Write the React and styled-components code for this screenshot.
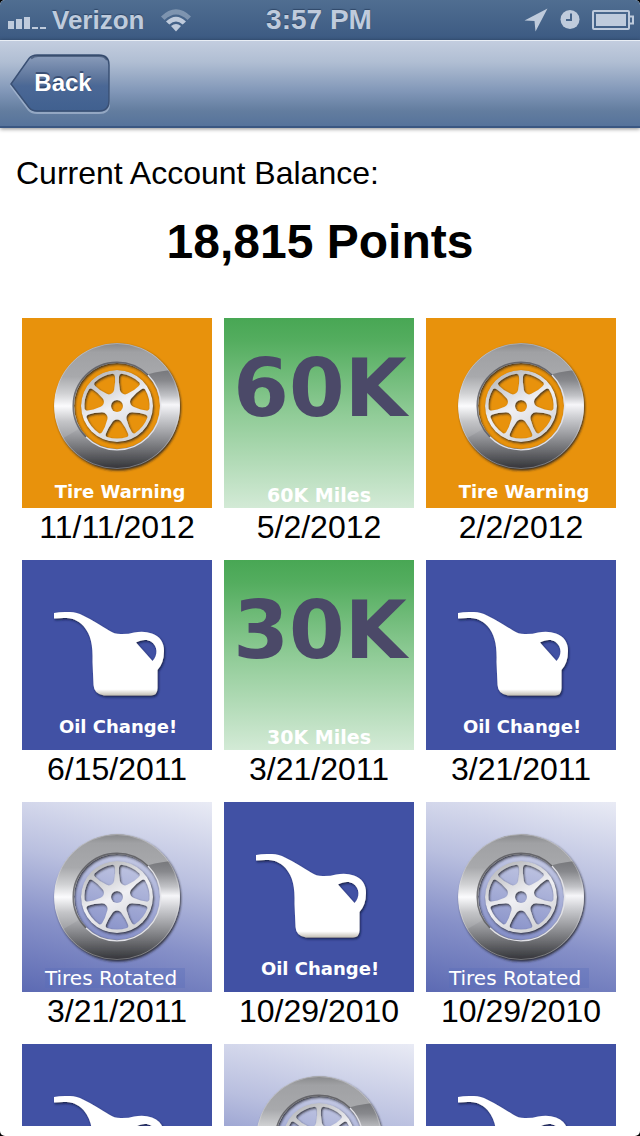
import React, { useId } from 'react'
import styled, { createGlobalStyle } from 'styled-components';

const GlobalStyle = createGlobalStyle`
    body {
      margin: 0;
      background: #000;
      font-family: "Liberation Sans", Arial, sans-serif;
      color: #000;
    }
`;

const Screen = styled.div`
    display: flex;
    flex-direction: column;
    height: 100vh;
    background: #fff;
    border-radius: 5px;
    overflow: hidden;
`;

const StatusBar = styled.div`
    display: grid;
    grid-template-columns: 1fr auto 1fr;
    align-items: center;
    flex: none;
    height: 40px;
    padding: 0 6px 0 8px;
    background: linear-gradient(#506e91, #3c5a82);
    color: #bfcbdc;
    font-weight: bold;
    text-shadow: 0 -1px 1px rgba(20, 40, 70, .5);

    svg {
      display: block;
      fill: currentColor;
    }
`;

const StatusGroup = styled.div`
    display: flex;
    align-items: center;
    justify-content: ${props => props.$end ? "flex-end" : "flex-start"};
    gap: ${props => props.$end ? "12px" : "6px"};
`;

const Carrier = styled.span`
    font-size: 26px;
    line-height: 40px;
    margin-right: 10px;
`;

const Clock = styled.span`
    padding-right: 4px;
    font-size: 28px;
    line-height: 40px;
`;

const NavBar = styled.header`
    display: flex;
    align-items: center;
    flex: none;
    box-sizing: border-box;
    height: 88px;
    padding: 0 10px;
    border-top: 1px solid #e9eef5;
    border-bottom: 2px solid #3a5782;
    background: linear-gradient(#c3cddf, #b0bed3 25%, #8096b7 60%, #637d9f 82%, #56739b);
    box-shadow: 0 1px 4px rgba(0, 0, 0, .45);
    z-index: 1;
`;

const BackButton = styled.button`
    display: grid;
    align-items: center;
    padding: 0;
    border: 0;
    background: none;
    color: #fff;
    font-family: inherit;
    font-size: 24px;
    font-weight: bold;
    line-height: 28px;
    text-shadow: 0 -2px 0 rgba(30, 50, 85, .6);
    cursor: pointer;

    svg, span {
      grid-area: 1 / 1;
      display: block;
    }

    span {
      padding: 0 0 2px 6px;
    }
`;

const Content = styled.main`
    flex: 1;
    min-height: 0;
    margin-bottom: 10px;
    overflow: auto;
    scrollbar-width: none;
`;

const BalanceLabel = styled.h2`
    margin: 25px 16px 21px;
    font-size: 32px;
    font-weight: normal;
    line-height: 40px;
`;

const Balance = styled.p`
    margin: 0 0 48px;
    font-size: 48px;
    font-weight: bold;
    line-height: 56px;
    text-align: center;
`;

const Grid = styled.ul`
    display: grid;
    grid-template-columns: repeat(3, 1fr);
    gap: 14px 12px;
    margin: 0;
    padding: 0 24px 0 22px;
    list-style: none;
`;

const backgrounds = {
  warning: "#e8920c",
  miles: "linear-gradient(#48a754, #54ad5f 12%, #8fcb96 50%, #d3ead6)",
  oil: "#4151a4",
  rotated: "linear-gradient(192deg, #e9ebf5, #b9bfdf 38%, #8690c8 68%, #5c6ab3)",
};

const Tile = styled.div`
    display: grid;
    aspect-ratio: 1;
    background: ${props => backgrounds[props.$kind]};

    > * {
      grid-area: 1 / 1;
    }

    svg {
      display: block;
      width: 100%;
      height: 100%;
    }
`;

const Caption = styled.span`
    place-self: end center;
    color: #fff;
    font-family: "DejaVu Sans", Verdana, sans-serif;
    font-size: 18px;
    font-weight: bold;
    line-height: 20px;
`;

const WarningCaption = styled(Caption)`
    padding-left: 6px;
    margin-bottom: 6px;
`;

const OilCaption = styled(Caption)`
    padding-left: 2px;
    margin-bottom: 13px;
`;

const MilesCaption = styled(Caption)`
    margin-bottom: 3px;
    font-size: 19px;
`;

const RotatedCaption = styled(Caption)`
    padding-right: 8px;
    margin: 0 4px 4px 0;
    background: rgba(90, 110, 185, .35);
    font-size: 20px;
    font-weight: normal;
`;

const MilesFigure = styled.strong`
    place-self: start center;
    margin-top: 31px;
    padding-left: 2px;
    color: #4b4968;
    font-family: "DejaVu Sans", Verdana, sans-serif;
    font-size: 80px;
    line-height: 80px;
`;

const EarnedOn = styled.time`
    display: block;
    font-size: 32px;
    line-height: 38px;
    text-align: center;
`;

function Tire({ cy }) {
  const id = useId();
  const spokes = [0, 1, 2, 3, 4, 5, 6];

  return (
    <svg viewBox="0 0 190 190" aria-hidden="true">
      <defs>
        <linearGradient id={id + "light"} x1="0" y1="-64" x2="0" y2="64" gradientUnits="userSpaceOnUse">
          <stop offset="0" stopColor="#858688" />
          <stop offset=".08" stopColor="#a0a1a4" />
          <stop offset=".27" stopColor="#a8a9ac" />
          <stop offset=".4" stopColor="#d0d1d3" />
          <stop offset=".5" stopColor="#fbfbfd" />
          <stop offset=".62" stopColor="#c4c5c8" />
          <stop offset=".8" stopColor="#909195" />
        </linearGradient>
        <linearGradient id={id + "dark"} x1="0" y1="-64" x2="0" y2="64" gradientUnits="userSpaceOnUse">
          <stop offset=".2" stopColor="#737478" />
          <stop offset=".3" stopColor="#87888c" />
          <stop offset=".42" stopColor="#c2c3c7" />
          <stop offset=".49" stopColor="#f6f6f9" />
          <stop offset=".58" stopColor="#d0d1d5" />
          <stop offset=".72" stopColor="#9c9da1" />
          <stop offset=".86" stopColor="#67686c" />
          <stop offset="1" stopColor="#2f3034" />
        </linearGradient>
        <linearGradient id={id + "rim"} x1="-20" y1="-36" x2="16" y2="36" gradientUnits="userSpaceOnUse">
          <stop offset="0" stopColor="#b4b5b8" />
          <stop offset=".5" stopColor="#f0f0f4" />
          <stop offset="1" stopColor="#cfd0d3" />
        </linearGradient>
        <mask id={id + "ring"} x="-70" y="-70" width="140" height="140" maskUnits="userSpaceOnUse">
          <circle r="63" fill="#fff" />
          <circle r="43" fill="#000" />
        </mask>
        <mask id={id + "wheel"} x="-70" y="-70" width="140" height="140" maskUnits="userSpaceOnUse">
          <circle r="36" fill="#fff" />
          <circle r="6" fill="#000" />
          {spokes.map(n => (
            <path
              key={n}
              transform={"rotate(" + (n * 360 / 7 + 180 / 7) + ")"}
              d="M-11 -27.500Q-12 -30 -10 -31A32.500 32.500 0 0 1 10 -31Q12 -30 11 -27.500Q9 -22 5.500 -17.500Q3.500 -13.500 0 -13.500Q-3.500 -13.500 -5.500 -17.500Q-9 -22 -11 -27.500Z"
            />
          ))}
        </mask>
        <filter id={id + "shadow"} x="-20%" y="-20%" width="140%" height="140%">
          <feDropShadow dx="1" dy="1.500" stdDeviation="1" floodColor="#202026" floodOpacity=".85" />
        </filter>
      </defs>
      <g transform={"translate(95 " + cy + ")"}>
        <g filter={"url(#" + id + "shadow)"}>
          <g mask={"url(#" + id + "ring)"}>
            <circle r="63" fill={"url(#" + id + "light)"} />
            <path d="M-64 38Q-50 30 -40 24Q0 -26 32 -32Q42 -35 64 -37V64H-64Z" fill={"url(#" + id + "dark)"} />
          </g>
        </g>
        <circle r="62.500" fill="none" stroke="#e6e6ea" strokeOpacity=".35" />
        <path d="M-31 31A43.500 43.500 0 0 1 31 -31" fill="none" stroke="#55555a" strokeWidth="1.500" strokeOpacity=".8" />
        <path d="M-31 31A43.500 43.500 0 0 0 31 -31" fill="none" stroke="#e2e2e8" strokeWidth="1.200" />
        <g filter={"url(#" + id + "shadow)"}>
          <circle r="36" fill={"url(#" + id + "rim)"} mask={"url(#" + id + "wheel)"} />
        </g>
      </g>
    </svg>
  )
}

function OilCan() {
  const id = useId();

  return (
    <svg viewBox="0 0 190 190" aria-hidden="true">
      <defs>
        <linearGradient id={id + "body"} x1="0" y1="52" x2="0" y2="136" gradientUnits="userSpaceOnUse">
          <stop offset=".92" stopColor="#fff" />
          <stop offset="1" stopColor="#bdb9ae" />
        </linearGradient>
        <filter id={id + "shadow"} x="-10%" y="-10%" width="120%" height="120%">
          <feDropShadow dx="1" dy="1.500" stdDeviation="1" floodColor="#0c1238" floodOpacity=".85" />
        </filter>
      </defs>
      <path
        filter={"url(#" + id + "shadow)"}
        fill={"url(#" + id + "body)"}
        fillRule="evenodd"
        d="M32 53Q38 51.500 48 52Q55 52 61 55.500C70 60 80 66 87 70.500Q93 74.500 100 74Q107 74 112 72.500Q122 70.500 130 73.500Q142 78 142 91Q142 103 135.500 110V128Q135.500 135.500 129 135.500H82Q72 134 71.500 125L70.500 102C71 85 69 75 61.500 66C53 57.500 46 57.500 32 58.500ZM114 82.500C119 79.500 125 79 129 81.500C136 86.500 136 95 130.500 101Z"
      />
    </svg>
  )
}

const rewards = [
  { kind: "warning", caption: "Tire Warning", date: "11/11/2012" },
  { kind: "miles", figure: "60K", caption: "60K Miles", date: "5/2/2012" },
  { kind: "warning", caption: "Tire Warning", date: "2/2/2012" },
  { kind: "oil", caption: "Oil Change!", date: "6/15/2011" },
  { kind: "miles", figure: "30K", caption: "30K Miles", date: "3/21/2011" },
  { kind: "oil", caption: "Oil Change!", date: "3/21/2011" },
  { kind: "rotated", caption: "Tires Rotated", date: "3/21/2011" },
  { kind: "oil", caption: "Oil Change!", date: "10/29/2010" },
  { kind: "rotated", caption: "Tires Rotated", date: "10/29/2010" },
  { kind: "oil" },
  { kind: "rotated" },
  { kind: "oil" },
];

const captions = {
  warning: WarningCaption,
  miles: MilesCaption,
  oil: OilCaption,
  rotated: RotatedCaption,
};

function Reward({ kind, figure, caption, date }) {
  const KindCaption = captions[kind];

  return (
    <li>
      <Tile $kind={kind}>
        {kind === "warning" && <Tire cy={88} />}
        {kind === "rotated" && <Tire cy={95} />}
        {kind === "oil" && <OilCan />}
        {figure && <MilesFigure>{figure}</MilesFigure>}
        {caption && <KindCaption>{caption}</KindCaption>}
      </Tile>
      {date && <EarnedOn>{date}</EarnedOn>}
    </li>
  )
}

function App() {
  return (
    <Screen>
      <GlobalStyle />
      <StatusBar>
        <StatusGroup>
          <svg width="38" height="20" viewBox="0 0 38 20" aria-hidden="true">
            <path d="M0 11h6v8H0zM8 9h6v10H8zM16 7h6v12h-6zM24 17h6v2h-6zM32 17h6v2h-6z" />
          </svg>
          <Carrier>Verizon</Carrier>
          <svg width="32" height="24" viewBox="0 0 32 24" aria-hidden="true">
            <path opacity=".45" d="M1 8.500Q16 -6 31 8.500L27.500 12Q16 1 4.500 12Z" />
            <path d="M6 13.500Q16 4 26 13.500L22.700 16.500Q16 10.500 9.300 16.500Z" />
            <path d="M11 18Q16 14 21 18L16 23.500Z" />
          </svg>
        </StatusGroup>
        <Clock>3:57 PM</Clock>
        <StatusGroup $end>
          <svg width="24" height="24" viewBox="0 0 24 24" aria-hidden="true">
            <path d="M23.500 .500L11.500 23.500L10.500 13L.500 12.500Z" />
          </svg>
          <svg width="20" height="20" viewBox="0 0 20 20" aria-hidden="true">
            <circle cx="10" cy="9.500" r="9.500" />
            <path d="M11 3.500V10H6" fill="none" stroke="#46648a" strokeWidth="2" />
          </svg>
          <svg width="42" height="20" viewBox="0 0 42 20" aria-hidden="true">
            <rect x="1" y="1" width="36" height="18" rx="1" fill="none" stroke="currentColor" strokeWidth="2" />
            <rect x="4" y="4" width="30" height="12" />
            <path d="M38 6.500h3v7h-3" fill="none" stroke="currentColor" strokeWidth="2" />
          </svg>
        </StatusGroup>
      </StatusBar>
      <NavBar>
        <BackButton type="button">
          <svg width="100" height="60" viewBox="0 0 100 60" aria-hidden="true">
            <defs>
              <linearGradient id="back-fill" x1="0" y1="0" x2="0" y2="1">
                <stop offset="0" stopColor="#8b9dbb" />
                <stop offset=".45" stopColor="#587199" />
                <stop offset=".55" stopColor="#4b6896" />
                <stop offset="1" stopColor="#40608f" />
              </linearGradient>
            </defs>
            <path d="M19 6Q22 3 27 3H89Q99 3 99 12V50Q99 59 89 59H27Q22 59 19 56L1 32Z" fill="none" stroke="#a9bbd3" strokeOpacity=".7" strokeWidth="2" />
            <path d="M19 4.500Q22 1 27 1H89Q99 1 99 11V47Q99 57 89 57H27Q22 57 19 53.500L1 30Z" fill="url(#back-fill)" stroke="#3a5074" strokeWidth="1.500" />
            <path d="M21 4.500Q24 2 28 2H89Q95 2 97 6" fill="none" stroke="#2c405f" strokeOpacity=".6" strokeWidth="2" />
          </svg>
          <span>Back</span>
        </BackButton>
      </NavBar>
      <Content>
        <BalanceLabel>Current Account Balance:</BalanceLabel>
        <Balance>18,815 Points</Balance>
        <Grid>
          {rewards.map((reward, index) => (
            <Reward key={index} {...reward} />
          ))}
        </Grid>
      </Content>
    </Screen>
  )
}

export default App
